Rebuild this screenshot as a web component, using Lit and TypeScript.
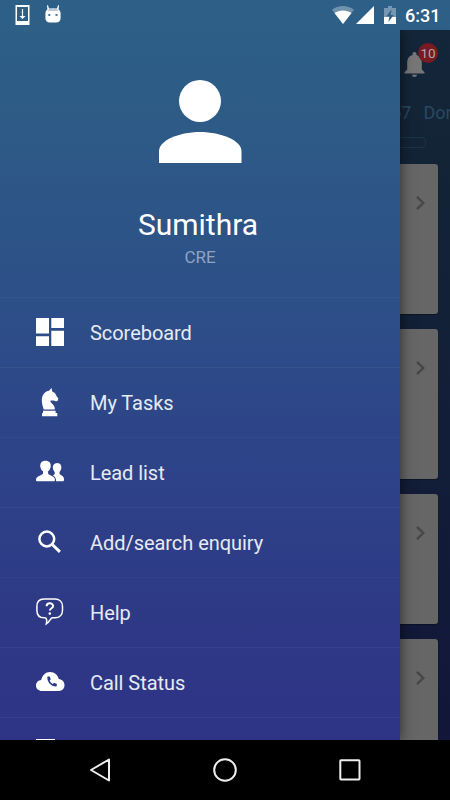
import { LitElement, html, css, svg } from "lit";
import { customElement } from "lit/decorators.js";

const menu = [
  { label: "Scoreboard", icon: svg`<path d="M0 0h13v15.500H0zM15.300 0H28v10H15.300zM0 18.300h13V28H0zM15.300 12.800H28V28H15.300z"/>` },
  { label: "My Tasks", icon: svg`<path d="M7.800 21.400C6 17 5 12 6.500 8 7.700 5 10 3.300 13 2.800L15.600 0l.6 3.500c2.300.7 3.600 2.500 4.300 4.500l1.800 2.500-.5 2.200-1.800.8c-1.500-1-3-1-5.700-.8-.3 2.300 5.200 4.300 4.500 8.700zM7 22.700h12.600v2.400H7zM6 25h15.300v3.300H6z"/>` },
  { label: "Lead list", icon: svg`<g transform="translate(0 1.400)"><path d="M17 9.200c-.6-2.900 1-5.700 4.200-5.700s4.800 2.800 4 5.800c-.4 1.500-1.200 2.700-1.700 3.200v1.800c.6 1.300 4.500 2 4.500 5.200v1.400q-.2.9-1.300.9h-6.600c0-3.400-1.300-4.700-3.400-5.700 1.100-.6 1.800-.9 2-1.800v-1.800c-.8-.7-1.500-1.900-1.700-3.300z"/><path stroke="#2e4187" stroke-width=".6" paint-order="stroke" d="M0 20.600c0-4.500 6.300-4.400 7-6.600v-2.200C5.500 11 4.600 9.100 4.300 7.300 3.900 3.500 5.900 1.400 9.500 1.400s5.700 2.200 5.200 5.900c-.3 1.800-1.200 3.700-2.600 4.500V14c.6 2.200 6.900 2.100 6.900 6.600 0 1-.5 1.200-1.500 1.200h-16C.4 21.800 0 21.600 0 20.600z"/></g>` },
  { label: "Add/search enquiry", icon: svg`<g fill="none" stroke="#fff" stroke-width="2.500"><circle cx="10.800" cy="11" r="7.400"/><path d="M16 16.200l7.900 7.700" stroke-width="3"/></g>` },
  { label: "Help", icon: svg`<path d="M8 .9h11c4.500 0 7.500 3 7.500 7.500v4c0 4.500-3 7.300-7.500 7.300h-2.500c-2 0-2.500 4-6.200 6.200.8-3 .5-6-1.300-6.200H8C3.600 19.700.9 16.900.9 12.400v-4C.9 3.900 3.500.9 8 .9z" fill="none" stroke="#fff" stroke-width="1.500"/><path d="M10.600 8.300c0-4 6.500-3.700 6.500-.4 0 2.500-3.200 2.200-3.200 4.600" fill="none" stroke="#fff" stroke-width="2"/><circle cx="13.800" cy="15.600" r="1.300"/>` },
  { label: "Call Status", icon: svg`<g transform="translate(0 .5)"><path d="M6 22.500C2.500 22.500 0 20.200 0 17c0-3 2.200-5.200 5.200-5.500C6.500 6.500 9.500 3.500 14 3.500c4.700 0 7.700 3 8.800 7 3.400.4 5.700 2.800 5.700 6.100 0 3.500-2.300 5.900-5.700 5.900z"/><path d="M11.300 8.300l2.200-.5 1.300 3-1.200 1.300c.6 1.500 1.700 2.700 3.200 3.400l1.300-1.200 2.900 1.300-.5 2.500c-5.300.4-9.500-4.500-9.200-9.800z" fill="#2d3a86"/></g>` },
  { label: "", icon: svg`<path d="M0 1h19v4H0z"/>` },
];

const cards = [150, 150, 130, 130];

@customElement("app-root")
export class AppRoot extends LitElement {
  static styles = css`
    :host { display: block; width: 450px; height: 800px; overflow: hidden; font-family: Roboto, sans-serif; color: #fff; background: #000; }
    * { box-sizing: border-box; }
    svg { display: block; fill: #fff; }
    .screen { position: relative; height: 740px; overflow: hidden; background: linear-gradient(#14273a 0, #132336 25%, #121d38 65%, #11163a 100%); }
    .status { position: relative; z-index: 3; height: 30px; background: #2d5f87; display: flex; align-items: center; padding: 0 10px 0 15px; }
    .status .gap { flex: 1; }
    .android { margin-left: 15px; }
    .signal { margin-left: 2px; }
    .battery { margin-left: 10px; }
    .clock { font-size: 18px; font-weight: 500; line-height: 30px; width: 35px; margin-left: 9px; padding-top: 1px; white-space: nowrap; }
    .page { height: 710px; display: flex; flex-direction: column; }
    .toolbar { flex: none; height: 68px; display: flex; justify-content: flex-end; padding: 13px 12px 0 0; }
    .bell { position: relative; width: 34px; height: 36px; }
    .bell svg { margin-top: 9px; }
    .badge { position: absolute; right: 0; top: 0; width: 20px; height: 20px; border-radius: 50%; background: #781a20; color: #aaa; font-size: 13.500px; line-height: 21px; text-align: center; }
    .tabs { flex: none; height: 39px; display: flex; align-items: flex-start; justify-content: flex-end; gap: 12px; color: #294963; font-size: 18px; line-height: 30px; margin-right: -15px; white-space: nowrap; }
    .progress { width: 120px; height: 11px; border: 1px solid #1b3346; border-radius: 4px; align-self: flex-end; margin-right: 24px; flex: none; }
    .cards { flex: none; display: flex; flex-direction: column; gap: 15px; padding: 16px 12px 0; }
    .card { flex: none; border-radius: 3px; background: #666; box-shadow: 0 1px 1px #0005; display: flex; justify-content: flex-end; padding: 31px 12px 0 0; }
    .drawer { position: absolute; z-index: 2; left: 0; top: 30px; width: 400px; height: 710px; overflow: hidden; background: linear-gradient(#2d5f87 0, #2d5b86 12%, #2d5088 37%, #2d4488 58%, #2e3886 85%, #2e3386 100%); box-shadow: 1px 0 12px #0008; }
    .profile { height: 267px; display: flex; flex-direction: column; align-items: center; padding-top: 50px; }
    .profile svg { margin-right: 1px; }
    .name { margin: 43px 4px 0 0; font-size: 30px; line-height: 38px; }
    .role { font-size: 17px; line-height: 22px; margin-top: 2px; color: #90a5c3; }
    .item { height: 70px; border-top: 1px solid #34548b; display: flex; align-items: center; padding: 0 0 2px 36px; font-size: 20px; color: #e6eaf2; }
    .item:nth-child(n + 4) { border-color: #344a8b; }
    .item:nth-child(n + 6) { border-color: #353f8b; }
    .item svg { width: 29px; height: 28px; overflow: visible; }
    .label { margin-left: 25px; line-height: 30px; padding-top: 2px; letter-spacing: -.05px; white-space: nowrap; }
    .item:last-child { align-items: flex-start; padding-top: 20px; }
    .nav { height: 60px; display: flex; align-items: center; justify-content: space-between; padding: 0 88px; }
    .nav svg { fill: none; stroke: #eee; stroke-width: 2; }
  `;

  render() {
    return html`
      <div class="screen">
        <div class="status">
          <svg width="15" height="20" viewBox="0 0 15 20"><path fill-rule="evenodd" d="M.5 0h14v20H.5zM2 2v14h11V2z"/><path d="M6.900 4h1.200v7h2.400L7.500 14l-3-3h2.400z"/></svg>
          <svg class="android" width="16" height="20" viewBox="0 0 16 20"><path d="M2 .2h1l1 3.400h8L13 .2h1l-.4 4.200c1.300.9 2 2.300 2 4V13c0 3-2 4.600-4.500 4.600H4.900C2.400 17.600.4 16 .4 13V8.400c0-1.700.7-3.100 2-4z"/><path d="M3 5c2-2 8-2 10 0v1H3z" fill="#bdcbd9"/><path d="M3.300 9h2v2h-2zM10.500 9h2v2h-2z" fill="#53799d"/></svg>
          <div class="gap"></div>
          <svg width="22" height="18" viewBox="0 0 22 18"><path d="M0 3.800C6.500-1.200 15.500-1.200 22 3.800L11 18z" opacity=".32"/><path d="M2.500 7C7.300 3.500 14.700 3.500 19.500 7L11 18z"/></svg>
          <svg class="signal" width="18" height="18" viewBox="0 0 18 18"><path d="M18 0v18H0z"/></svg>
          <svg class="battery" width="12" height="18" viewBox="0 0 12 18"><path d="M4 0h4v2h4v16H0V2h4z" opacity=".35"/><path d="M0 11h12v7H0z"/><path d="M7.600 3.500L2.500 10.200h3L4.400 16l5.300-7H6.600z" fill="#2d5f87"/></svg>
          <div class="clock">6:31</div>
        </div>
        <div class="page">
          <div class="toolbar">
            <div class="bell">
              <svg width="21" height="26" viewBox="0 0 21 26"><path fill="#777" d="M10.500 0c1.200 0 2 .8 2 2v1c3.500.9 5.300 3.900 5.300 7.500v7l2.700 2.700v1.300H.5v-1.300l2.700-2.700v-7C3.200 6.900 5 3.900 8.500 3V2c0-1.200.8-2 2-2zM8 22.800h5c0 3-5 3-5 0z"/></svg>
              <div class="badge">10</div>
            </div>
          </div>
          <div class="tabs"><span>57</span><span>Done</span></div>
          <div class="progress"></div>
          <div class="cards">
            ${cards.map((h) => html`<div class="card" style="height:${h}px"><svg width="11" height="16" viewBox="0 0 11 16"><path d="M2 1.800L8.300 8 2 14.200" fill="none" stroke="#474747" stroke-width="2.400"/></svg></div>`)}
          </div>
        </div>
        <div class="drawer">
          <div class="profile">
            <svg width="84" height="83" viewBox="0 0 84 83"><circle cx="42" cy="21" r="21"/><path d="M1 83V71C1 61 20 52 42 52S83.500 61 83.500 71v12z"/></svg>
            <div class="name">Sumithra</div>
            <div class="role">CRE</div>
          </div>
          ${menu.map((m) => html`<div class="item"><svg viewBox="0 0 29 28">${m.icon}</svg><span class="label">${m.label}</span></div>`)}
        </div>
      </div>
      <div class="nav">
        <svg width="24" height="26" viewBox="0 0 24 26"><path d="M21 2.500v21L3 13z" stroke-linejoin="round"/></svg>
        <svg width="26" height="26" viewBox="0 0 26 26"><circle cx="13" cy="13" r="10.800"/></svg>
        <svg width="24" height="24" viewBox="0 0 24 24"><rect x="2.300" y="2.300" width="19.200" height="19.200" rx=".8"/></svg>
      </div>`;
  }
}
